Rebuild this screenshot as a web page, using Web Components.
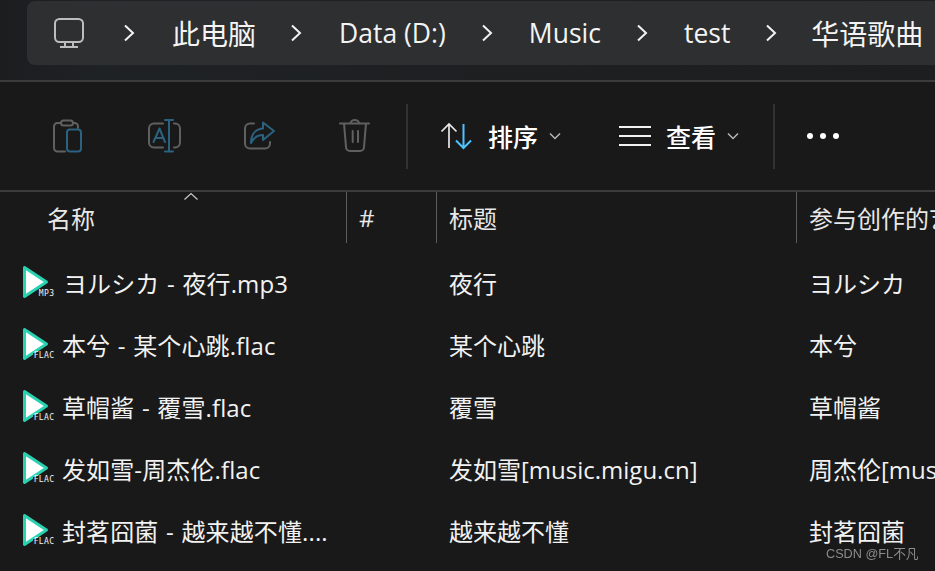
<!DOCTYPE html>
<html><head><meta charset="utf-8"><style>
html,body{margin:0;padding:0;background:#191919;overflow:hidden}
body{width:935px;height:571px;font-family:"Open Sans","Noto Sans CJK SC",sans-serif;color:#fff}
</style></head><body>
<x-explorer>
<x-breadcrumb slot="crumb"></x-breadcrumb>
<x-toolbar slot="tools"></x-toolbar>
<x-columns slot="head"></x-columns>
<x-file-row type="MP3" name="ヨルシカ - 夜行.mp3" title="夜行" artist="ヨルシカ"></x-file-row>
<x-file-row type="FLAC" name="本兮 - 某个心跳.flac" title="某个心跳" artist="本兮"></x-file-row>
<x-file-row type="FLAC" name="草帽酱 - 覆雪.flac" title="覆雪" artist="草帽酱"></x-file-row>
<x-file-row type="FLAC" name="发如雪-周杰伦.flac" title="发如雪[music.migu.cn]" artist="周杰伦[music.migu.cn]"></x-file-row>
<x-file-row type="FLAC" name="封茗囧菌 - 越来越不懂...." title="越来越不懂" artist="封茗囧菌"></x-file-row>
</x-explorer>
<script>
function def(name,html){
  customElements.define(name,class extends HTMLElement{
    connectedCallback(){
      if(this.shadowRoot)return;
      const r=this.attachShadow({mode:'open'});
      r.innerHTML=typeof html==='function'?html(this):html;
    }
  });
}
const GREY='#606060',BLUE='#2a627f';
def('x-explorer',`<style>
:host{display:flex;flex-direction:column;width:935px;height:571px;overflow:hidden;background:#191919}
.top{box-sizing:border-box;padding:1px 0 15px 27px;background:linear-gradient(90deg,#1b1d1f,#1f2224 10%,#1c1e1f);border-bottom:2px solid #3c3c3c;height:82px;flex:none}
.bar{height:108px;flex:none;border-bottom:2px solid #3c3c3c}
.rows{padding-top:8px;display:flex;flex-direction:column}
</style>
<div class="top"><slot name="crumb"></slot></div>
<div class="bar"><slot name="tools"></slot></div>
<slot name="head"></slot>
<div class="rows"><slot></slot></div>`);
const chev=`<svg class="c" width="12" height="18" viewBox="0 0 12 18"><path d="M2 1.500 10 9 2 16.500" fill="none" stroke="#f2f2f2" stroke-width="2"/></svg>`;
def('x-breadcrumb',`<style>
:host{display:flex;align-items:center;height:64px;background:#2d2f31;border-radius:8px 0 0 8px;padding-left:26px;font-size:26.500px;color:#f4f4f4;white-space:nowrap;overflow:hidden}
svg.c{margin:0 35px;flex:none}
svg.pc{flex:none;margin-right:3px}
span.z{font-size:28px}
</style>
<svg class="pc" width="32" height="32" viewBox="0 0 32 32" fill="none" stroke="#bdbdbd" stroke-width="2"><rect x="2" y="2" width="28" height="23" rx="4.500"/><path d="M12 25.500v4M20 25.500v4M7 30h18"/></svg>
${chev}<span class="z" style="margin:0 -1px 0 2px">此电脑</span>${chev}<span style="margin-left:2px">Data (D:)</span>${chev}<span style="margin-left:1px">Music</span>${chev}<span style="margin-left:1px">test</span>${chev}<span class="z" style="margin-left:-1px">华语歌曲</span>`);
def('x-tool-icon',h=>`<style>:host{display:flex;align-items:center;justify-content:center;flex:none}svg{display:block}</style><svg width="36" height="36" viewBox="0 0 36 36" fill="none" stroke-width="2" stroke-linecap="round" stroke-linejoin="round">${({
 paste:`<g stroke="${GREY}"><path d="M11 5H7.500A3.500 3.500 0 0 0 4 8.500V30a3.500 3.500 0 0 0 3.500 3.500H15M23 5h1.500A3.500 3.500 0 0 1 28 8.500V10"/><rect x="11" y="2.500" width="12" height="5" rx="2.500"/></g><rect x="17" y="11.500" width="14" height="22" rx="3" stroke="${BLUE}"/>`,
 rename:`<path stroke="${GREY}" d="M16 5.500H7a5 5 0 0 0-5 5v14a5 5 0 0 0 5 5h9M27 5.500h1a5 5 0 0 1 5 5v14a5 5 0 0 1-5 5h-1"/><path stroke="${BLUE}" d="M22 2V33.500M18 2h8M18 33.500h8M6.500 24 12.500 10.500 18 24M8.500 20h8"/>`,
 share:`<path stroke="${GREY}" d="M12 5.500H8a5 5 0 0 0-5 5v15a5 5 0 0 0 5 5h15a5 5 0 0 0 5-5V24"/><path stroke="${BLUE}" d="M21 4.500 32 13 21 22v-5c-6 0-9.500 3-12 8 0-8 4-14 12-14.500z"/>`,
 trash:`<path stroke="${GREY}" d="M3 5.500h29M13.500 5.500a4.300 3.500 0 0 1 8.600 0M7 5.500 9 29a4 4 0 0 0 4 4h10a4 4 0 0 0 4-4l2-23.500M15.700 13v11M21 13v11"/>`
})[h.getAttribute('k')]}</svg>`);
def('x-drop',h=>`<style>:host{display:flex;align-items:center;flex:none;font-size:25px;color:#fff;font-weight:500}
svg{display:block;flex:none}.t{margin:0 11px 0 15px}</style>
<slot></slot><span class="t">${h.getAttribute('label')}</span><svg width="12" height="8" viewBox="0 0 12 8" fill="none" stroke="#b8b8b8" stroke-width="1.500"><path d="M1 1.500 6 6.500 11 1.500"/></svg>`);
def('x-toolbar',`<style>
:host{display:flex;align-items:center;height:108px;padding-left:19px}
x-tool-icon{width:97px}
.s{width:2px;height:65px;background:#323232;flex:none}
.d{display:flex;gap:7px;margin-left:32px}.d i{width:6px;height:6px;border-radius:50%;background:#fff;display:block}
</style>
<x-tool-icon k="paste"></x-tool-icon><x-tool-icon k="rename"></x-tool-icon><x-tool-icon k="share" style="width:93px"></x-tool-icon><x-tool-icon k="trash"></x-tool-icon>
<span class="s" style="margin-left:3px"></span>
<x-drop label="排序" style="margin-left:32px"><svg width="33" height="28" viewBox="0 0 33 28" fill="none" stroke-width="1.700"><path stroke="#e8e8e8" d="M9 26V2M1.500 9.500 9 2l7.500 7.500"/><path stroke="#4cc2ff" stroke-width="2" d="M23.500 2v24M16 18.500l7.500 7.500 7.500-7.500"/></svg></x-drop>
<x-drop label="查看" style="margin-left:58px"><svg width="32" height="20" viewBox="0 0 32 20" fill="none" stroke="#f2f2f2" stroke-width="2"><path d="M0 1h32M0 10h32M0 19h32"/></svg></x-drop>
<span class="s" style="margin-left:34px"></span>
<span class="d"><i></i><i></i><i></i></span>`);
def('x-columns',`<style>
:host{display:grid;grid-template-columns:346px 90px 360px 1fr;height:51px;font-size:24px;color:#e8e8e8;position:relative;flex:none}
div{display:flex;align-items:center;padding-left:12px;white-space:nowrap;overflow:hidden;height:51px;box-sizing:border-box}
div+div{border-left:1px solid #5c5c5c}
.n{padding-left:47px}
svg{position:absolute;left:184px;top:0}
</style>
<div class="n">名称</div><div>#</div><div>标题</div><div>参与创作的艺术家</div>
<svg width="14" height="9" viewBox="0 0 14 9" fill="none" stroke="#c8c8c8" stroke-width="1.200"><path d="M.5 7.500 7 1.500l6.500 6"/></svg>`);
def('x-file-icon',h=>`<style>
:host{display:block;position:relative;width:34px;height:34px;flex:none}
svg{position:absolute;left:0;top:0}
b{position:absolute;right:2px;bottom:2px;background:#1c1c1c;color:#f2f2f2;font:400 8px/6px "DejaVu Sans Mono","Liberation Mono",monospace;padding:0 .5px;letter-spacing:.4px}
</style>
<svg width="28" height="34" viewBox="0 0 28 34"><path d="M1.500 2.500 23.500 17 1.500 31.500z" fill="#fff" stroke="#2bd2b2" stroke-width="3" stroke-linejoin="round"/></svg>
<b>${h.getAttribute('type')}</b>`);
def('x-file-row',h=>{const g=k=>h.getAttribute(k);const mp3=g('type')==='MP3';return `<style>
:host{display:grid;grid-template-columns:346px 90px 360px 1fr;height:62px;font-size:24px;color:#f2f2f2;white-space:nowrap;overflow:hidden}
div{display:flex;align-items:center;overflow:hidden;padding-left:13px;box-sizing:border-box}
.n{padding-left:23px}
.n span{margin-left:${mp3?6:5}px;word-spacing:1.200px;letter-spacing:.12px}
</style>
<div class="n"><x-file-icon type="${g('type')}"></x-file-icon><span>${g('name')}</span></div><div></div><div>${g('title')}</div><div>${g('artist')}</div>`});
def('x-mark',`<style>:host{display:block;position:fixed;left:826px;top:543px;font:12.700px 'Liberation Sans','Noto Sans CJK SC',sans-serif;color:#8c8c8c;white-space:nowrap}</style><slot></slot>`);
</script>
<x-mark>CSDN @FL不凡</x-mark>
</body></html>
